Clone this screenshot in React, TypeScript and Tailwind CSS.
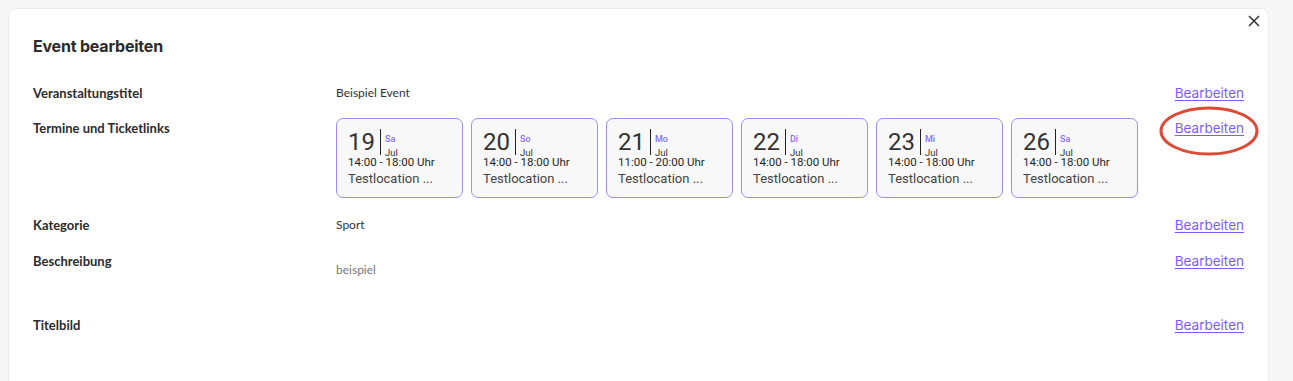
import React from "react";

const dates = [
  { day: "19", wd: "Sa", time: "14:00 - 18:00 Uhr" },
  { day: "20", wd: "So", time: "14:00 - 18:00 Uhr" },
  { day: "21", wd: "Mo", time: "11:00 - 20:00 Uhr" },
  { day: "22", wd: "Di", time: "14:00 - 18:00 Uhr" },
  { day: "23", wd: "Mi", time: "14:00 - 18:00 Uhr" },
  { day: "26", wd: "Sa", time: "14:00 - 18:00 Uhr" },
];

function EditLink() {
  return (
    <a
      href="#"
      className="text-[13.5px] leading-[20px] text-[#7b5cff] underline underline-offset-2 font-['Inter',sans-serif]"
    >
      Bearbeiten
    </a>
  );
}

function Label({ children }: { children: React.ReactNode }) {
  return (
    <div className="text-[13px] leading-[20px] font-bold text-[#2b2b2b] font-['Lato',sans-serif]">
      {children}
    </div>
  );
}

function DateCard({ day, wd, time }: { day: string; wd: string; time: string }) {
  return (
    <div className="w-[127px] h-[80px] rounded-[7px] border border-[#a08af7] bg-[#f8f8f8] pl-[11px] pt-[10px] font-['Roboto',sans-serif] text-[#333]">
      <div className="flex items-start h-[26px]">
        <span className="text-[24px] leading-[26px] text-[#333]">{day}</span>
        <span className="ml-[5px] w-px h-[26px] bg-[#222]" />
        <div className="flex flex-col pl-[4px]">
          <span className="mt-[5px] text-[9px] leading-[10px] font-medium text-[#8b6cf6]">{wd}</span>
          <span className="mt-[5px] text-[9.5px] leading-[8px] text-[#333]">Jul</span>
        </div>
      </div>
      <div className="mt-[2px] text-[11.5px] leading-[10px] text-[#1f1f1f]">{time}</div>
      <div className="mt-[3px] text-[13px] leading-[18px] text-[#444]">Testlocation ...</div>
    </div>
  );
}

export default function App() {
  return (
    <div className="h-[381px] overflow-hidden bg-[#f7f7f7] pt-[8px] pl-[8px]">
      <div className="relative w-[1261px] h-[420px] rounded-[8px] border border-[#ececec] bg-white px-[24px] pt-[25px]">
        <button className="absolute top-[5px] right-[7px] p-[1px]">
          <svg width="12" height="12" viewBox="0 0 12 12" fill="none" stroke="#333" strokeWidth="1.5">
            <path d="M1 1L11 11M11 1L1 11" />
          </svg>
        </button>

        <h1 className="text-[16px] leading-[24px] font-bold text-[#2b2b2b] font-['Inter',sans-serif] tracking-[-0.2px]">
          Event bearbeiten
        </h1>

        <div className="mt-[25px] flex flex-col">
          <div className="grid grid-cols-[303px_1fr_auto] items-start">
            <Label>Veranstaltungstitel</Label>
            <div className="text-[12px] leading-[20px] text-[#333] font-['Lato',sans-serif]">Beispiel Event</div>
            <EditLink />
          </div>

          <div className="mt-[15px] grid grid-cols-[303px_1fr_auto] items-start">
            <Label>Termine und Ticketlinks</Label>
            <div className="flex gap-[8px]">
              {dates.map((d) => (
                <DateCard key={d.day} {...d} />
              ))}
            </div>
            <EditLink />
          </div>

          <div className="mt-[17px] grid grid-cols-[303px_1fr_auto] items-start">
            <Label>Kategorie</Label>
            <div className="text-[12px] leading-[20px] text-[#333] font-['Lato',sans-serif]">Sport</div>
            <EditLink />
          </div>

          <div className="mt-[16px] grid grid-cols-[303px_1fr_auto] items-start">
            <Label>Beschreibung</Label>
            <div className="mt-[9px] text-[12px] leading-[20px] text-[#777] font-['Lato',sans-serif]">beispiel</div>
            <EditLink />
          </div>

          <div className="mt-[35px] grid grid-cols-[303px_1fr_auto] items-start">
            <Label>Titelbild</Label>
            <div />
            <EditLink />
          </div>
        </div>

        <svg
          className="absolute left-[1150px] top-[97px] pointer-events-none"
          width="100"
          height="50"
          viewBox="0 0 100 50"
          fill="none"
        >
          <ellipse cx="50" cy="25" rx="48" ry="23" stroke="#dd4a36" strokeWidth="3" />
        </svg>
      </div>
    </div>
  );
}
